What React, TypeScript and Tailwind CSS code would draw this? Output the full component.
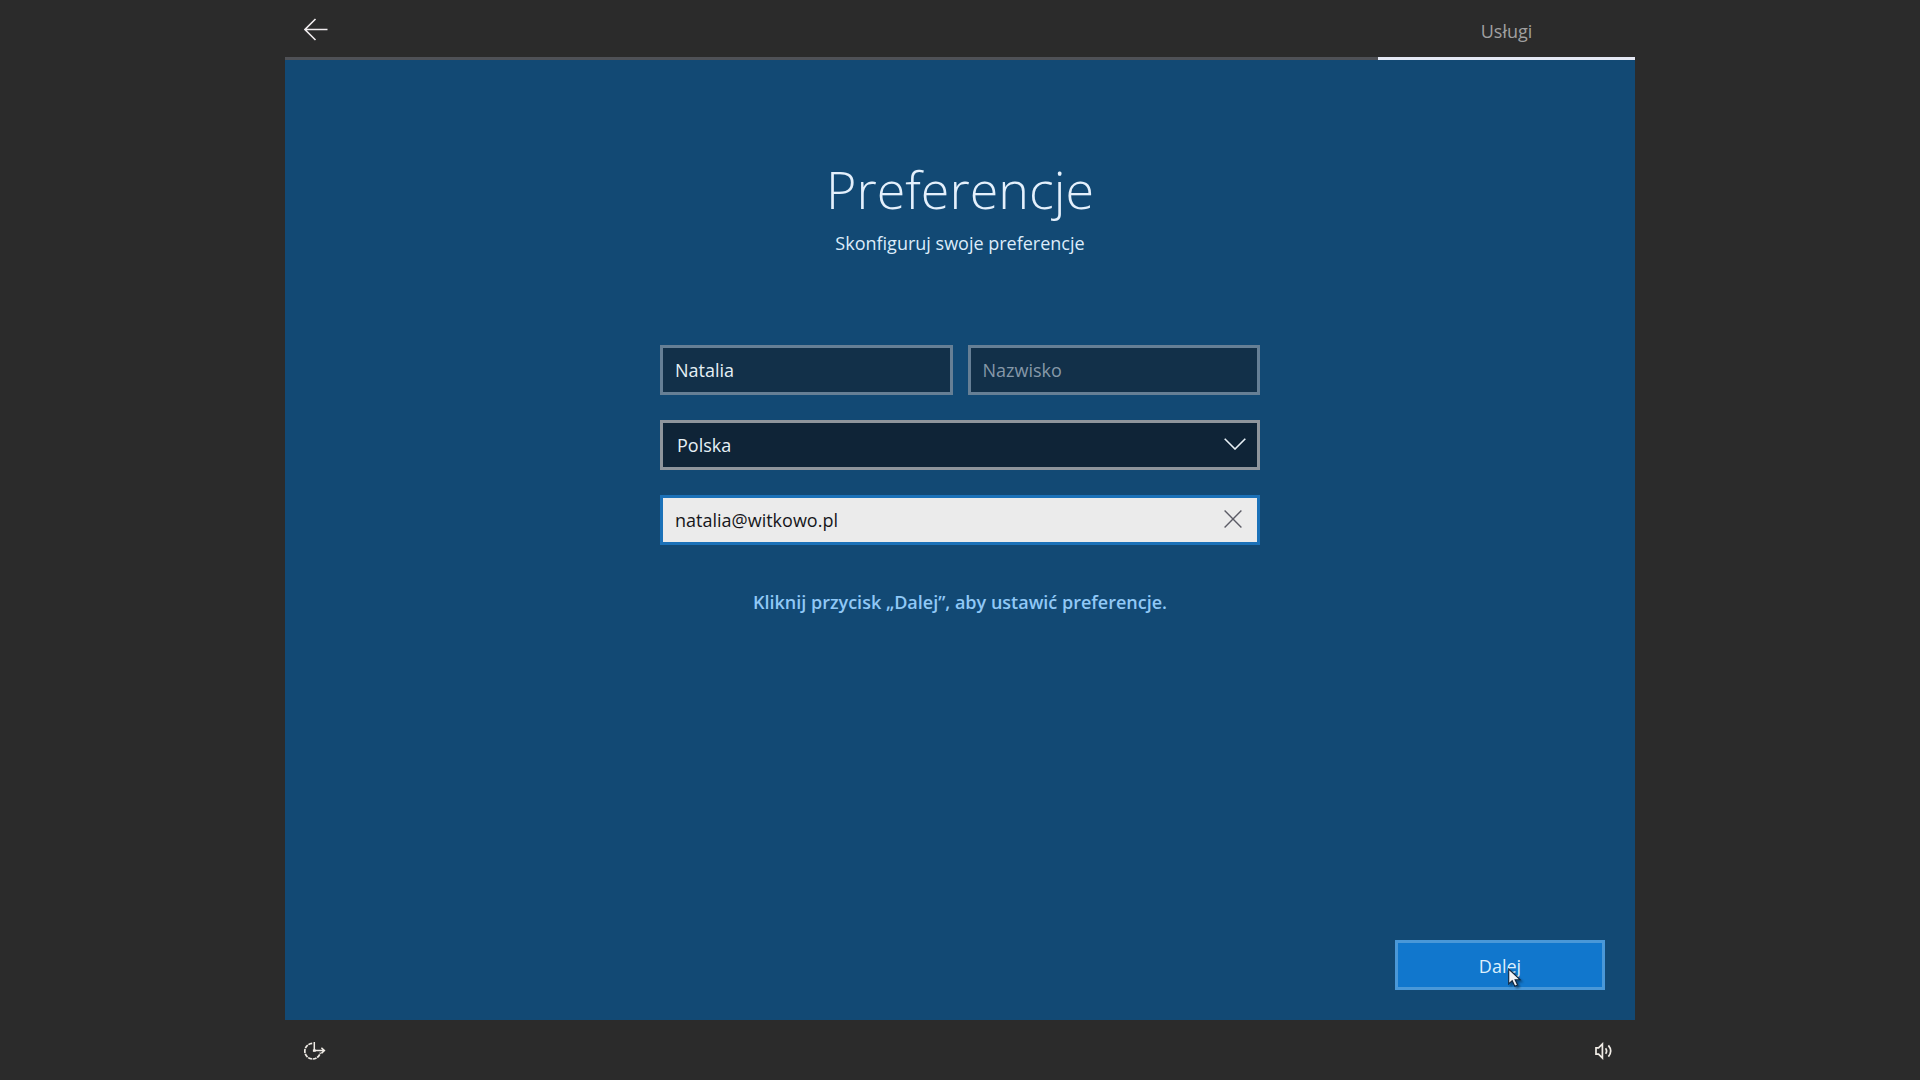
import { useState } from "react";

function BackIcon() {
  return (
    <svg width="24" height="24" viewBox="0 0 24 24" fill="none" stroke="currentColor" strokeWidth="1.6" aria-hidden="true">
      <path d="M1 12.5H23.5M11.5 2L1 12.5L11.5 23" />
    </svg>
  );
}

function ChevronIcon() {
  return (
    <svg width="22" height="12" viewBox="0 0 22 12" fill="none" stroke="currentColor" strokeWidth="1.6" aria-hidden="true">
      <path d="M0.7 0.8L11 11L21.3 0.8" />
    </svg>
  );
}

function ClearIcon() {
  return (
    <svg width="18" height="18" viewBox="0 0 18 18" fill="none" stroke="currentColor" strokeWidth="1.4" aria-hidden="true">
      <path d="M0.6 0.6L17.4 17.4M17.4 0.6L0.6 17.4" />
    </svg>
  );
}

function EaseOfAccessIcon() {
  return (
    <svg width="22" height="20" viewBox="0 0 22 20" fill="none" stroke="currentColor" aria-hidden="true">
      <path d="M8.2 2.4A7.8 7.8 0 1 0 16.3 11.6" strokeWidth="1.7" strokeDasharray="4 0.8" />
      <path d="M10.3 1V9.6H20M17.4 6.8L20.4 9.6L17.4 12.4" strokeWidth="1.5" />
      <path d="M8.9 9.6H11.7" strokeWidth="2.4" />
    </svg>
  );
}

function VolumeIcon() {
  return (
    <svg width="18" height="18" viewBox="0 0 18 18" fill="none" stroke="currentColor" strokeWidth="1.7" aria-hidden="true">
      <path d="M1 5.8H3.6L7.4 2V16L3.6 12.2H1Z" />
      <path d="M10.6 6.2Q12.6 9 10.6 11.8M13.4 3.4Q18 9 13.4 14.6" />
    </svg>
  );
}

function Pointer() {
  return (
    <svg className="pointer-events-none absolute top-[25px] left-[110px] drop-shadow-[2px_2px_1px_rgba(0,0,0,0.4)]" width="14" height="20" viewBox="0 0 14 20" aria-hidden="true">
      <path d="M0.7 1V16L4.2 12.7L6.8 18.3L9.6 17L7.1 11.7H12Z" fill="#f2f2f6" stroke="#10243a" strokeWidth="1.1" />
    </svg>
  );
}

export default function App() {
  const [first, setFirst] = useState("Natalia");
  const [last, setLast] = useState("");
  const [email, setEmail] = useState("natalia@witkowo.pl");

  return (
    <div className="min-h-screen bg-[#2b2b2b] font-['Open_Sans','Noto_Sans',sans-serif] text-lg">
      <div className="mx-auto flex min-h-screen w-full max-w-[1350px] flex-col">
        <header className="flex h-[60px] items-stretch">
          <div className="flex flex-1 items-center border-b-3 border-[#4f5156] pl-[19px]">
            <button type="button" aria-label="Wstecz" className="text-[#f0ecee]">
              <BackIcon />
            </button>
          </div>
          <nav className="w-[257px] border-b-3 border-[#e4e8f4]">
            <a href="#uslugi" aria-current="page" className="flex h-full items-center justify-center pt-1 text-[#a0a0a0]">
              Usługi
            </a>
          </nav>
        </header>

        <main className="flex flex-1 flex-col items-center bg-[#124974] px-[30px] pt-[94px] pb-[30px]">
          <h1 className="text-[52px] leading-[70px] font-light text-[#e4f0fc]">Preferencje</h1>
          <p className="mt-[5px] leading-7 text-[#dcecfa]">Skonfiguruj swoje preferencje</p>

          <form id="preferences" className="mt-22 flex w-full max-w-[600px] flex-col gap-[25px]" onSubmit={(e) => e.preventDefault()}>
            <div className="flex gap-[15px]">
              <input
                aria-label="Imię"
                value={first}
                onChange={(e) => setFirst(e.target.value)}
                className="h-[50px] min-w-0 flex-1 border-3 border-[#667f95] bg-[#123049] px-3 text-[#e6f0f6] outline-none"
              />
              <input
                aria-label="Nazwisko"
                placeholder="Nazwisko"
                value={last}
                onChange={(e) => setLast(e.target.value)}
                className="h-[50px] min-w-0 flex-1 border-3 border-[#667f95] bg-[#123049] px-3 text-[#e6f0f6] outline-none placeholder:text-[#8698a8]"
              />
            </div>
            <div className="relative">
              <select aria-label="Kraj" className="block h-[50px] w-full appearance-none border-3 border-[#8f959c] bg-[#0f2437] px-[14px] text-[#e6f0f6] outline-none">
                <option>Polska</option>
              </select>
              <span className="pointer-events-none absolute inset-y-0 right-[14px] flex items-center pb-[2px] text-[#e8f0f6]">
                <ChevronIcon />
              </span>
            </div>
            <div className="relative">
              <input
                type="email"
                aria-label="Adres e-mail"
                value={email}
                onChange={(e) => setEmail(e.target.value)}
                className="block h-[50px] w-full border-3 border-[#1b71b8] bg-[#ebebeb] pr-12 pl-3 text-[#16161a] outline-none"
              />
              <button type="button" aria-label="Wyczyść" onClick={() => setEmail("")} className="absolute inset-y-0 right-[18px] flex items-center pb-[3px] text-[#5c5c66]">
                <ClearIcon />
              </button>
            </div>
          </form>

          <p className="mt-[43px] leading-7 font-semibold text-[#90c8f6]">Kliknij przycisk „Dalej”, aby ustawić preferencje.</p>

          <button type="submit" form="preferences" className="relative mt-auto h-[50px] w-[210px] self-end border-3 border-[#4a98d8] bg-[#1177cd] pt-[2px] text-[#dcf0fc]">
            Dalej
            <Pointer />
          </button>
        </main>

        <footer className="flex h-[60px] items-center justify-between pt-[2px] pr-[22px] pl-[19px] text-[#f0ece6]">
          <button type="button" aria-label="Ułatwienia dostępu">
            <EaseOfAccessIcon />
          </button>
          <button type="button" aria-label="Głośność">
            <VolumeIcon />
          </button>
        </footer>
      </div>
    </div>
  );
}
